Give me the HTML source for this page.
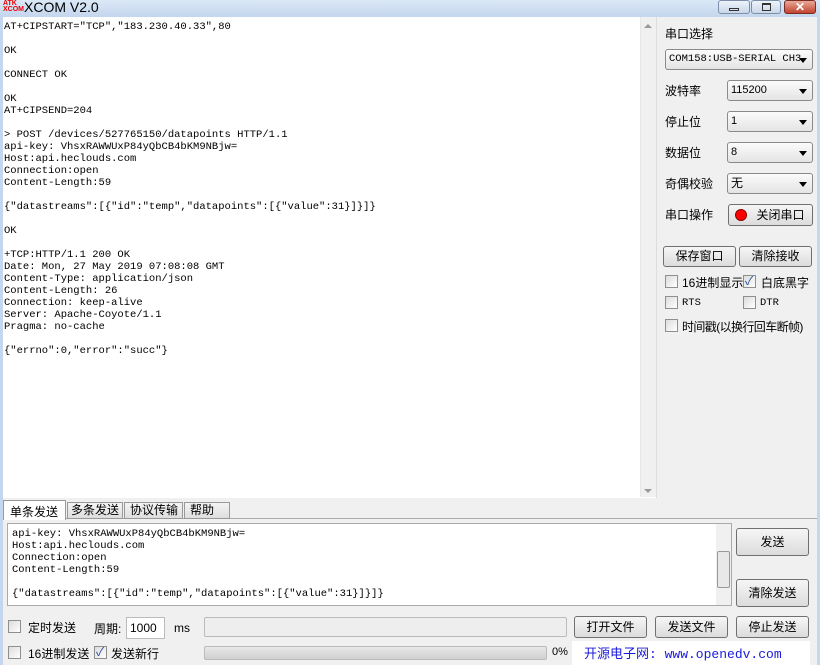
<!DOCTYPE html>
<html><head><meta charset="utf-8"><style>
*{margin:0;padding:0;box-sizing:border-box}
body{width:820px;height:665px;position:relative;overflow:hidden;background:#f0f0f0;font-family:"Liberation Sans","Noto Sans CJK SC",sans-serif;font-size:12px;color:#000}
.a{position:absolute;white-space:nowrap}
.mono{font-family:"Liberation Mono","Noto Sans CJK SC",monospace;font-size:10.5px;white-space:pre;line-height:12px}
.btn{position:absolute;border:1px solid #707070;border-radius:3px;background:linear-gradient(#f6f6f6,#dcdcdc);text-align:center;font-size:12px;white-space:nowrap}
.sel{position:absolute;border:1px solid #8a8a8a;border-radius:3px;background:linear-gradient(#fbfbfb,#e4e4e4);font-size:11px;padding-left:3px;line-height:19px;white-space:nowrap;overflow:hidden}
.sel:after{content:"";position:absolute;right:5px;top:8px;border:4px solid transparent;border-top:5px solid #000}
.cb{position:absolute;width:13px;height:13px;border:1px solid #8e8f8f;background:linear-gradient(135deg,#dcdcdc,#fff)}
.lbl{position:absolute;font-size:12px;white-space:nowrap;letter-spacing:0}
</style></head><body>
<div class="a" style="left:0;top:0;width:820px;height:17px;background:linear-gradient(#dbe8f6,#c4d7ee)"></div>
<div class="a" style="left:3px;top:1px;width:14px;height:13px;color:#e00;font-size:7px;line-height:6px;font-weight:bold">ATK<br>XCOM</div>
<div class="a" style="left:24px;top:-1px;font-size:14px;color:#000">XCOM V2.0</div>
<div class="a" style="left:718px;top:0;width:32px;height:14px;border:1px solid #7d8ea8;border-radius:3px;background:linear-gradient(#eef3fa,#c9d6e8)"><div class="a" style="left:10px;top:7px;width:10px;height:3px;border:1px solid #333"></div></div>
<div class="a" style="left:751px;top:0;width:30px;height:14px;border:1px solid #7d8ea8;border-radius:3px;background:linear-gradient(#eef3fa,#c9d6e8)"><div class="a" style="left:10px;top:2px;width:9px;height:8px;border:1px solid #333;border-top-width:2px"></div></div>
<div class="a" style="left:784px;top:0;width:32px;height:14px;border:1px solid #7a2b22;border-radius:3px;background:linear-gradient(#e9a99a,#c2432e);color:#fff;font-weight:bold;font-size:12px;text-align:center;line-height:12px">✕</div>
<div class="a" style="left:0;top:17px;width:3px;height:648px;background:#c4d7ee"></div>
<div class="a" style="left:817px;top:17px;width:3px;height:648px;background:#c4d7ee"></div>
<div class="a" style="left:3px;top:17px;width:654px;height:481px;background:#fff;border-right:1px solid #ddd"></div>
<div class="a" style="left:640px;top:17px;width:16px;height:480px;background:#f0f0f0;border-left:1px solid #e6e6e6"></div>
<div class="a" style="left:644px;top:24px;border:4px solid transparent;border-bottom:4px solid #999;border-top:0"></div>
<div class="a" style="left:644px;top:489px;border:4px solid transparent;border-top:4px solid #999;border-bottom:0"></div>
<div class="a mono" style="left:4px;top:21px">AT+CIPSTART="TCP","183.230.40.33",80

OK

CONNECT OK

OK
AT+CIPSEND=204

&gt; POST /devices/527765150/datapoints HTTP/1.1
api-key: VhsxRAWWUxP84yQbCB4bKM9NBjw=
Host:api.heclouds.com
Connection:open
Content-Length:59

{"datastreams":[{"id":"temp","datapoints":[{"value":31}]}]}

OK

+TCP:HTTP/1.1 200 OK
Date: Mon, 27 May 2019 07:08:08 GMT
Content-Type: application/json
Content-Length: 26
Connection: keep-alive
Server: Apache-Coyote/1.1
Pragma: no-cache

{"errno":0,"error":"succ"}</div>

<div class="lbl" style="left:665px;top:25px">串口选择</div>
<div class="sel" style="left:665px;top:49px;width:148px;height:21px;font-family:'Liberation Mono',monospace;font-size:10.5px">COM158:USB-SERIAL CH3</div>
<div class="lbl" style="left:665px;top:82px">波特率</div>
<div class="sel" style="left:727px;top:80px;width:86px;height:21px">115200</div>
<div class="lbl" style="left:665px;top:113px">停止位</div>
<div class="sel" style="left:727px;top:111px;width:86px;height:21px">1</div>
<div class="lbl" style="left:665px;top:144px">数据位</div>
<div class="sel" style="left:727px;top:142px;width:86px;height:21px">8</div>
<div class="lbl" style="left:665px;top:175px">奇偶校验</div>
<div class="sel" style="left:727px;top:173px;width:86px;height:21px;font-size:12px">无</div>
<div class="lbl" style="left:665px;top:206px">串口操作</div>
<div class="btn" style="left:728px;top:204px;width:85px;height:22px;line-height:20px;padding-left:20px">关闭串口</div>
<div class="a" style="left:735px;top:209px;width:12px;height:12px;border-radius:50%;background:#f00;border:1px solid #800"></div>
<div class="btn" style="left:663px;top:246px;width:73px;height:21px;line-height:19px">保存窗口</div>
<div class="btn" style="left:739px;top:246px;width:73px;height:21px;line-height:19px">清除接收</div>
<div class="cb" style="left:665px;top:275px"></div><div class="lbl" style="left:682px;top:274px">16进制显示</div>
<div class="cb" style="left:743px;top:275px"></div><div class="a" style="left:745px;top:272px;color:#2a4d9c;font-size:12px">✓</div><div class="lbl" style="left:761px;top:274px">白底黑字</div>
<div class="cb" style="left:665px;top:296px"></div><div class="a mono" style="left:682px;top:297px">RTS</div>
<div class="cb" style="left:743px;top:296px"></div><div class="a mono" style="left:760px;top:297px">DTR</div>
<div class="cb" style="left:665px;top:319px"></div><div class="lbl" style="left:682px;top:318px;letter-spacing:-0.6px">时间戳(以换行回车断帧)</div>

<div class="a" style="left:3px;top:518px;width:814px;height:147px;background:#f0f0f0;border-top:1px solid #aaa"></div>
<div class="a" style="left:3px;top:500px;width:63px;height:20px;background:#fff;border:1px solid #999;border-bottom:none;font-size:12px;padding:2px 0 0 6px">单条发送</div>
<div class="a" style="left:67px;top:502px;width:56px;height:17px;background:linear-gradient(#f4f4f4,#dedede);border:1px solid #999;font-size:12px;padding-left:3px;line-height:15px">多条发送</div>
<div class="a" style="left:124px;top:502px;width:59px;height:17px;background:linear-gradient(#f4f4f4,#dedede);border:1px solid #999;font-size:12px;padding-left:5px;line-height:15px">协议传输</div>
<div class="a" style="left:184px;top:502px;width:46px;height:17px;background:linear-gradient(#f4f4f4,#dedede);border:1px solid #999;font-size:12px;padding-left:5px;line-height:15px">帮助</div>
<div class="a" style="left:7px;top:523px;width:725px;height:83px;background:#fff;border:1px solid #aaa"></div>
<div class="a" style="left:716px;top:524px;width:15px;height:81px;background:#f0f0f0"></div>
<div class="a" style="left:717px;top:551px;width:13px;height:37px;border:1px solid #999;border-radius:2px;background:#e8e8e8"></div>
<div class="a mono" style="left:12px;top:528px">api-key: VhsxRAWWUxP84yQbCB4bKM9NBjw=
Host:api.heclouds.com
Connection:open
Content-Length:59

{"datastreams":[{"id":"temp","datapoints":[{"value":31}]}]}</div>
<div class="btn" style="left:736px;top:528px;width:73px;height:28px;line-height:26px">发送</div>
<div class="btn" style="left:736px;top:579px;width:73px;height:28px;line-height:26px">清除发送</div>
<div class="cb" style="left:8px;top:620px"></div><div class="lbl" style="left:28px;top:619px">定时发送</div>
<div class="lbl" style="left:94px;top:620px">周期:</div>
<div class="a" style="left:126px;top:617px;width:39px;height:22px;background:#fff;border:1px solid #bbb;font-size:12px;padding:3px 0 0 3px">1000</div>
<div class="lbl" style="left:174px;top:621px">ms</div>
<div class="a" style="left:204px;top:617px;width:363px;height:20px;border:1px solid #bbb;border-radius:2px;background:#eee"></div>
<div class="btn" style="left:574px;top:616px;width:73px;height:22px;line-height:20px">打开文件</div>
<div class="btn" style="left:655px;top:616px;width:73px;height:22px;line-height:20px">发送文件</div>
<div class="btn" style="left:736px;top:616px;width:73px;height:22px;line-height:20px">停止发送</div>
<div class="cb" style="left:8px;top:646px"></div><div class="lbl" style="left:28px;top:645px">16进制发送</div>
<div class="cb" style="left:94px;top:646px"></div><div class="a" style="left:96px;top:643px;color:#2a4d9c;font-size:12px">✓</div><div class="lbl" style="left:111px;top:645px">发送新行</div>
<div class="a" style="left:204px;top:646px;width:343px;height:14px;border:1px solid #bbb;border-radius:2px;background:linear-gradient(#e8e8e8,#d0d0d0)"></div>
<div class="a" style="left:552px;top:646px;font-size:11px">0%</div>
<div class="a" style="left:572px;top:641px;width:238px;height:24px;background:#fff;color:#1a1adb;font-family:'Liberation Mono','Noto Sans CJK SC',monospace;font-size:13px;padding:2px 0 0 12px">开源电子网: www.openedv.com</div>
</body></html>
